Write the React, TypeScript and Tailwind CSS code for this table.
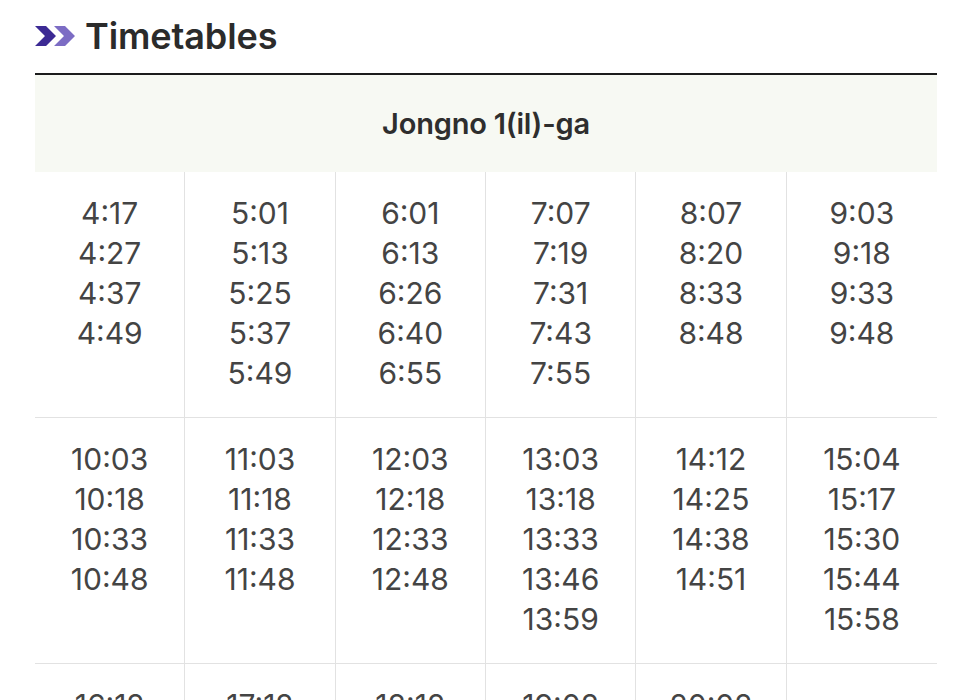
import React from "react";

const rows: string[][][] = [
  [
    ["4:17", "4:27", "4:37", "4:49"],
    ["5:01", "5:13", "5:25", "5:37", "5:49"],
    ["6:01", "6:13", "6:26", "6:40", "6:55"],
    ["7:07", "7:19", "7:31", "7:43", "7:55"],
    ["8:07", "8:20", "8:33", "8:48"],
    ["9:03", "9:18", "9:33", "9:48"],
  ],
  [
    ["10:03", "10:18", "10:33", "10:48"],
    ["11:03", "11:18", "11:33", "11:48"],
    ["12:03", "12:18", "12:33", "12:48"],
    ["13:03", "13:18", "13:33", "13:46", "13:59"],
    ["14:12", "14:25", "14:38", "14:51"],
    ["15:04", "15:17", "15:30", "15:44", "15:58"],
  ],
  [
    ["16:12", "16:27", "16:42", "16:57"],
    ["17:12", "17:27", "17:42", "17:57"],
    ["18:12", "18:27", "18:42", "18:57"],
    ["19:02", "19:17", "19:32", "19:47"],
    ["20:02", "20:17", "20:32", "20:47"],
    [],
  ],
];

export default function App() {
  return (
    <div
      className="w-[972px] h-[700px] overflow-hidden bg-white px-[35px]"
      style={{ fontFamily: "Inter, 'Noto Sans', sans-serif" }}
    >
      <div className="flex items-center h-[73px] gap-[8px] pb-[1px]">
        <svg width="42" height="22" viewBox="0 0 42 22" className="shrink-0">
          <path d="M0 1 L11 1 L21 11 L11 21 L0 21 L10 11 Z" fill="#3c2a94" />
          <path d="M19 1 L30 1 L40 11 L30 21 L19 21 L29 11 Z" fill="#7c6cc4" />
        </svg>
        <h1 className="text-[36px] font-semibold text-[#2b2b2b] leading-none tracking-[-0.1px]">
          Timetables
        </h1>
      </div>
      <div className="border-t-2 border-[#1c1c1c]">
        <div className="h-[97px] bg-[#f7f9f3] flex items-center justify-center">
          <span className="text-[29px] font-semibold text-[#2e2e2e] tracking-[-0.2px]">Jongno 1(il)-ga</span>
        </div>
        {rows.map((row, ri) => (
          <div key={ri} className="grid grid-cols-6 border-b border-[#e2e2e2] h-[246px]">
            {row.map((cell, ci) => (
              <div
                key={ci}
                className={`flex flex-col items-center pt-[21px] text-[30px] leading-[40px] text-[#444444] ${
                  ci < 5 ? "border-r border-[#e2e2e2]" : ""
                }`}
              >
                {cell.map((t) => (
                  <span key={t}>{t}</span>
                ))}
              </div>
            ))}
          </div>
        ))}
      </div>
    </div>
  );
}
